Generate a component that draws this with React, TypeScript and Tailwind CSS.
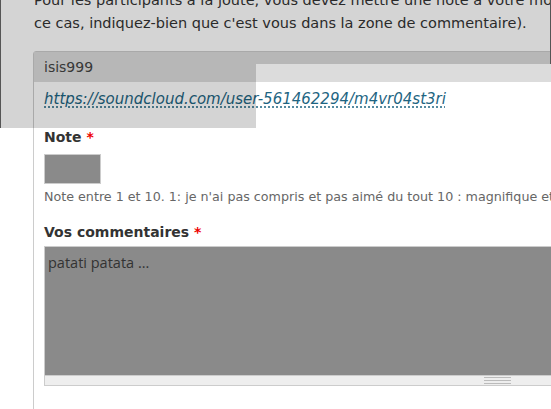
import React from "react"

export default function App() {
  return (
    <div className="relative w-[551px] h-[409px] overflow-hidden bg-white font-['DejaVu_Sans',sans-serif] text-[#333]">
      {/* intro text, scrolled partly out of view */}
      <div className="-mt-[11px] pl-[34px] text-[14.5px] leading-[23px] whitespace-nowrap">
        <p>Pour les participants à la joute, vous devez mettre une note à votre morceau (dans</p>
        <p>ce cas, indiquez-bien que c'est vous dans la zone de commentaire).</p>
      </div>

      {/* comment card */}
      <div className="ml-[33px] mt-[16px] w-[600px] border border-[#ccc] rounded-t-[3px]">
        <div className="h-[30px] bg-[#dcdcdc] px-[10px] flex items-center text-[14px] text-[#444]">isis999</div>
        <div className="px-[10px] pt-[7px] pb-[30px]">
          <a className="block italic text-[15px] leading-[20px] text-[#1e6582] underline decoration-dotted underline-offset-[3px]">
            https://soundcloud.com/user-561462294/m4vr04st3ri
          </a>

          <div className="mt-[19px] text-[14px] leading-[18px] font-bold">
            Note <span className="text-[#e00]">*</span>
          </div>
          <div className="mt-[8px] w-[57px] h-[30px] bg-[#8a8a8a] border border-[#ccc]"></div>
          <div className="mt-[5px] text-[12.7px] leading-[16px] text-[#666] whitespace-nowrap">
            Note entre 1 et 10. 1: je n'ai pas compris et pas aimé du tout 10 : magnifique et je l'adore
          </div>

          <div className="mt-[18px] text-[14px] leading-[18px] font-bold">
            Vos commentaires <span className="text-[#e00]">*</span>
          </div>
          <div className="mt-[5px] border border-[#ccc]">
            <div className="h-[128px] bg-[#8a8a8a] px-[3px] pt-[7px] font-['Open_Sans',sans-serif] text-[14.5px] leading-[18px] text-[#333]">
              patati patata ...
            </div>
            <div className="h-[10px] bg-[#eeeeee] border-t border-[#ccc] flex items-center pl-[439px]">
              <div className="w-[27px] flex flex-col gap-[2px]">
                <div className="h-px bg-[#bbb]"></div>
                <div className="h-px bg-[#bbb]"></div>
                <div className="h-px bg-[#bbb]"></div>
              </div>
            </div>
          </div>
        </div>
      </div>

      {/* screen selection overlay */}
      <div className="absolute left-0 top-0 w-[551px] h-[64px] bg-black/[0.17] border-l border-r border-[#555]"></div>
      <div className="absolute left-0 top-[64px] w-[256px] h-[64px] bg-black/[0.17] border-l border-[#555]"></div>
    </div>
  )
}
